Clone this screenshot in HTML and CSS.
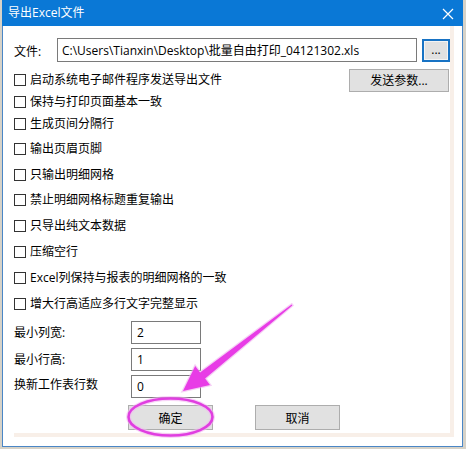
FILE: index.html
```html
<!DOCTYPE html>
<html lang="zh-CN">
<head>
<meta charset="utf-8">
<title>导出Excel文件</title>
<link rel="stylesheet" href="styles.css">
</head>
<body>
<div class="window">
  <div class="titlebar">
    <span class="title">导出Excel文件</span>
    <svg class="close" width="12" height="12" viewBox="0 0 12 12"><path d="M1 1 L11 11 M11 1 L1 11" stroke="#fff" stroke-width="1.2" fill="none"/></svg>
  </div>
  <div class="content">
    <div class="file-row">
      <span class="label">文件:</span>
      <div class="input path">C:\Users\Tianxin\Desktop\批量自由打印_04121302.xls</div>
      <div class="btn browse">...</div>
    </div>
    <div class="options">
      <div class="opt"><span class="cb"></span><span class="opt-text">启动系统电子邮件程序发送导出文件</span><div class="btn send">发送参数...</div></div>
      <div class="opt"><span class="cb"></span><span class="opt-text">保持与打印页面基本一致</span></div>
      <div class="opt"><span class="cb"></span><span class="opt-text">生成页间分隔行</span></div>
      <div class="opt"><span class="cb"></span><span class="opt-text">输出页眉页脚</span></div>
      <div class="opt"><span class="cb"></span><span class="opt-text">只输出明细网格</span></div>
      <div class="opt"><span class="cb"></span><span class="opt-text">禁止明细网格标题重复输出</span></div>
      <div class="opt"><span class="cb"></span><span class="opt-text">只导出纯文本数据</span></div>
      <div class="opt"><span class="cb"></span><span class="opt-text">压缩空行</span></div>
      <div class="opt"><span class="cb"></span><span class="opt-text">Excel列保持与报表的明细网格的一致</span></div>
      <div class="opt"><span class="cb"></span><span class="opt-text">增大行高适应多行文字完整显示</span></div>
    </div>
    <div class="fields">
      <span class="field-label">最小列宽:</span><div class="input num">2</div>
      <span class="field-label">最小行高:</span><div class="input num">1</div>
      <span class="field-label raised">换新工作表行数</span><div class="input num">0</div>
    </div>
    <div class="actions">
      <div class="btn action">确定</div>
      <div class="btn action">取消</div>
    </div>
  </div>
</div>
<svg class="annotation" width="466" height="449" viewBox="0 0 466 449">
  <ellipse cx="170.5" cy="417" rx="42" ry="18.5" fill="none" stroke="#f3b8f3" stroke-width="5" opacity="0.6"/>
  <ellipse cx="170.5" cy="417" rx="42" ry="18.5" fill="none" stroke="#e03ee0" stroke-width="2.6"/>
  <polygon points="292.3,305.4 205.1,378.6 210,385 183,391 195.2,366 200.1,372.4 291.7,304.6" fill="#f0b0f0" stroke="#f0b0f0" stroke-width="2.5" opacity="0.6"/>
  <polygon points="292.3,305.4 205.1,378.6 210,385 183,391 195.2,366 200.1,372.4 291.7,304.6" fill="#e83ce6"/>
</svg>
</body>
</html>
```
FILE: styles.css
```css
html, body {
  margin: 0;
  padding: 0;
}
body {
  width: 466px;
  height: 449px;
  background: #d6d2c8;
  position: relative;
  overflow: hidden;
  font-family: "Open Sans", "Noto Sans CJK SC", sans-serif;
  font-size: 12px;
  color: #000;
}
.window {
  margin-left: 2px;
  width: 461px;
  height: 447px;
  box-sizing: border-box;
  background: #fff;
  border: 1px solid #4a86c6;
  border-top: none;
  display: flex;
  flex-direction: column;
}
.titlebar {
  height: 26px;
  flex: none;
  background: #0a78d6;
  margin: 0 -1px;
  display: flex;
  align-items: center;
  padding-left: 6px;
  padding-right: 9px;
  color: #fff;
}
.title {
  flex: 1;
  font-size: 12px;
  line-height: 14px;
}
.close {
  display: block;
  margin-top: 1px;
}
.content {
  margin-left: 11px;
  width: 436px;
  padding-top: 12px;
  padding-bottom: 3px;
  border-right: 4px solid #f8efe8;
  border-bottom: 4px solid #f8efe8;
}
.file-row {
  display: flex;
  align-items: center;
  height: 24px;
}
.label {
  width: 43px;
  flex: none;
  line-height: 14px;
  padding-top: 3px;
}
.input {
  box-sizing: border-box;
  border: 1px solid #7a7a7a;
  background: #fff;
  display: flex;
  align-items: center;
  white-space: nowrap;
  overflow: hidden;
}
.path {
  width: 360px;
  height: 24px;
  padding-left: 4px;
  padding-bottom: 1px;
}
.btn {
  box-sizing: border-box;
  background: #e1e1e1;
  border: 1px solid #adadad;
  display: flex;
  align-items: center;
  justify-content: center;
  white-space: nowrap;
}
.browse {
  margin-left: 5px;
  width: 28px;
  height: 23px;
  margin-top: 1px;
  border: 2px solid #1873c4;
  box-shadow: inset 0 0 0 1px #f4f4f4;
  padding-bottom: 2px;
}
.options {
  margin-top: 12px;
  display: grid;
  grid-template-rows: 22px 22px 25px 26px 25px 26px 26px 26px 26px 12px;
}
.opt {
  height: 12px;
  display: flex;
  align-items: center;
}
.cb {
  width: 12px;
  height: 12px;
  box-sizing: border-box;
  border: 1px solid #333;
  background: #fff;
  flex: none;
}
.opt-text {
  margin-left: 4px;
  line-height: 14px;
}
.send {
  margin-left: auto;
  margin-right: 1px;
  width: 100px;
  height: 23px;
  flex: none;
}
.fields {
  margin-top: 11px;
  display: grid;
  grid-template-columns: 117px 70px;
  grid-auto-rows: 23px;
  row-gap: 4px;
  align-items: center;
}
.field-label {
  line-height: 14px;
}
.raised {
  margin-top: -4px;
}
.num {
  height: 23px;
  padding-left: 5px;
}
.actions {
  margin-top: 7px;
  margin-left: 114px;
  display: flex;
  gap: 42px;
}
.action {
  width: 85px;
  height: 25px;
}
.annotation {
  position: absolute;
  left: 0;
  top: 0;
  pointer-events: none;
}
```
